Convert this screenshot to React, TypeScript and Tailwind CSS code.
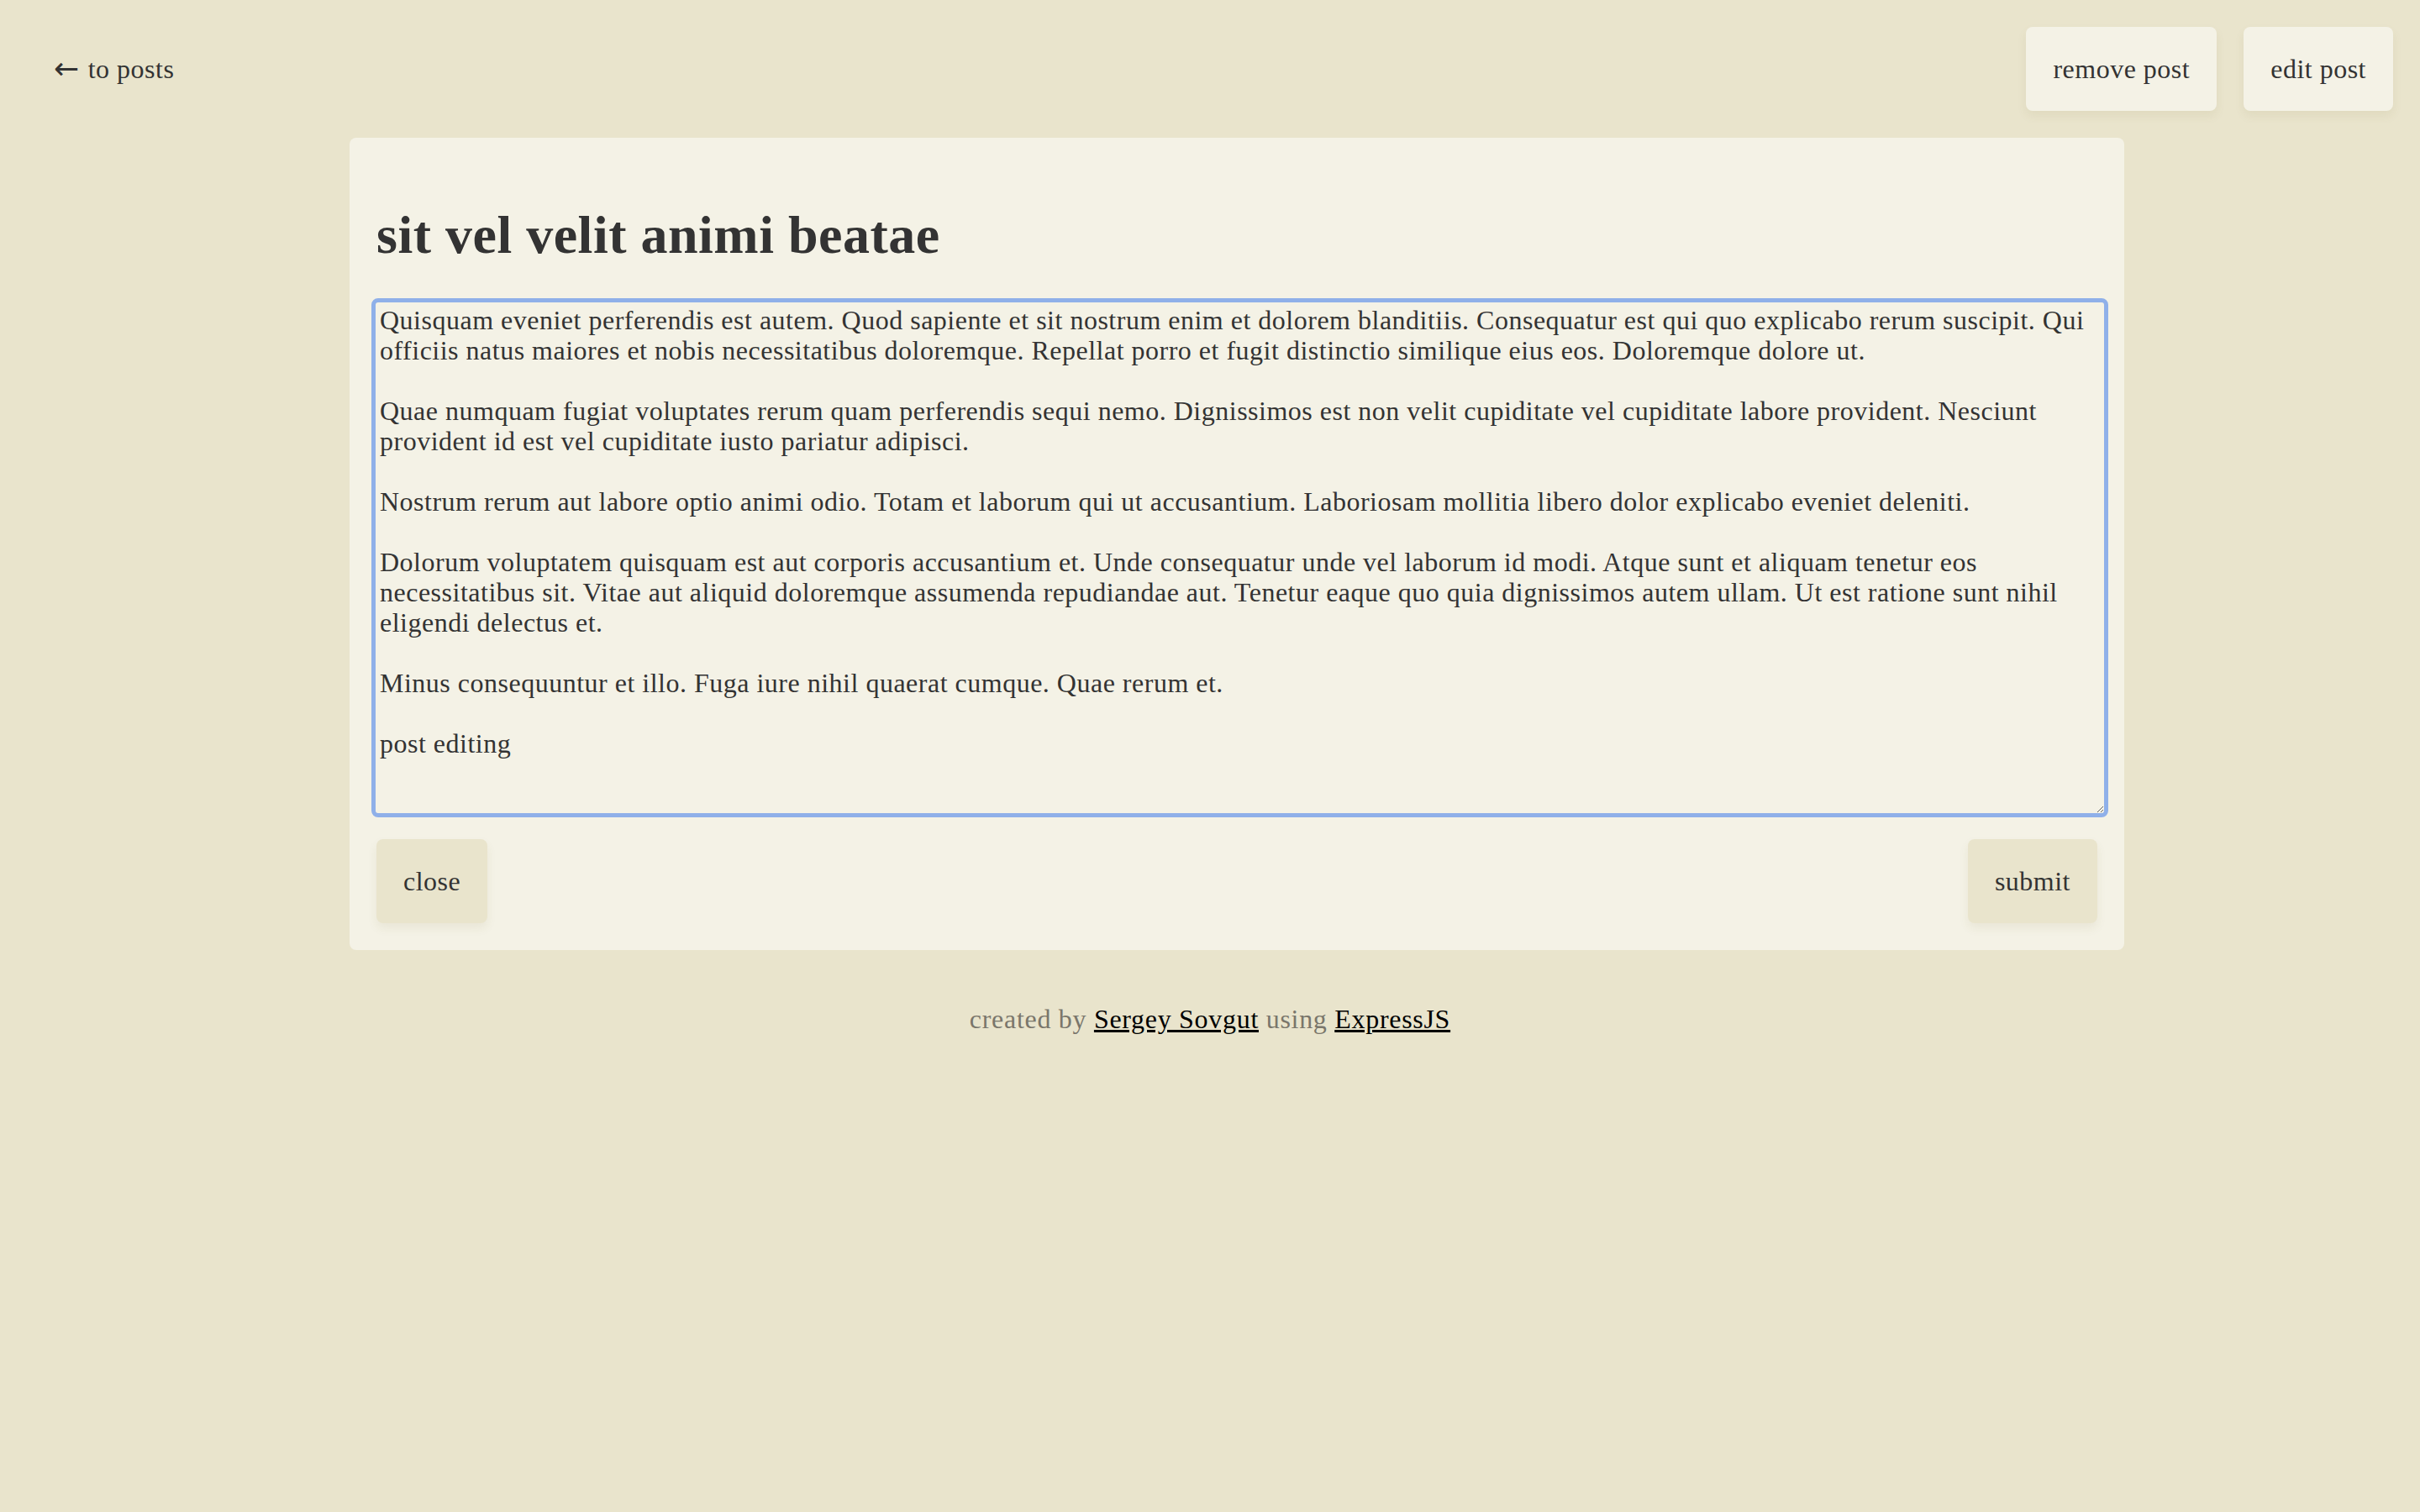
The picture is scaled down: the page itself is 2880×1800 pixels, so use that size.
const postBody = `Quisquam eveniet perferendis est autem. Quod sapiente et sit nostrum enim et dolorem blanditiis. Consequatur est qui quo explicabo rerum suscipit. Qui officiis natus maiores et nobis necessitatibus doloremque. Repellat porro et fugit distinctio similique eius eos. Doloremque dolore ut.

Quae numquam fugiat voluptates rerum quam perferendis sequi nemo. Dignissimos est non velit cupiditate vel cupiditate labore provident. Nesciunt provident id est vel cupiditate iusto pariatur adipisci.

Nostrum rerum aut labore optio animi odio. Totam et laborum qui ut accusantium. Laboriosam mollitia libero dolor explicabo eveniet deleniti.

Dolorum voluptatem quisquam est aut corporis accusantium et. Unde consequatur unde vel laborum id modi. Atque sunt et aliquam tenetur eos necessitatibus sit. Vitae aut aliquid doloremque assumenda repudiandae aut. Tenetur eaque quo quia dignissimos autem ullam. Ut est ratione sunt nihil eligendi delectus et.

Minus consequuntur et illo. Fuga iure nihil quaerat cumque. Quae rerum et.

post editing`

export default function App() {
  return (
    <div className="min-h-screen bg-[#e9e4cc] text-[#333333] font-['Liberation_Serif',serif] text-[32px] leading-[36px] tracking-[0.5px]">
      {/* Header */}
      <header className="flex items-center justify-between p-8">
        <a href="#" className="flex items-center p-8 text-[#333333]">
          <span className="mr-[10px] font-['DejaVu_Sans',sans-serif] text-[36px] leading-[36px]">←</span>
          to posts
        </a>
        <div className="flex gap-8">
          <button className="p-8 rounded-lg bg-[#f4f2e6] shadow-[0_6px_12px_rgba(120,100,40,0.08)]">
            remove post
          </button>
          <button className="p-8 rounded-lg bg-[#f4f2e6] shadow-[0_6px_12px_rgba(120,100,40,0.08)]">
            edit post
          </button>
        </div>
      </header>

      {/* Post card */}
      <div className="flex justify-center pl-16">
        <main className="w-[2112px] rounded-lg bg-[#f4f2e6] p-8">
          <h1 className="mt-[47px] mb-[38px] text-[64px] leading-[74px] font-bold">
            sit vel velit animi beatae
          </h1>
          <textarea
            defaultValue={postBody}
            spellCheck={false}
            className="block -ml-[6px] w-[2067px] h-[618px] rounded-[8px] border-[5px] border-[#8fb0e9] bg-transparent pl-[5px] pr-[5px] pt-[3px] text-[32px] leading-[36px] tracking-[0.5px] text-[#333333] outline-none font-['Liberation_Serif',serif]"
          />
          <div className="mt-[26px] flex justify-between">
            <button className="p-8 rounded-lg bg-[#e9e4cc] shadow-[0_6px_12px_rgba(120,100,40,0.08)]">
              close
            </button>
            <button className="p-8 rounded-lg bg-[#e9e4cc] shadow-[0_6px_12px_rgba(120,100,40,0.08)]">
              submit
            </button>
          </div>
        </main>
      </div>

      {/* Footer */}
      <footer className="mt-16 text-center text-[#7a766b] tracking-[0.7px]">
        created by{' '}
        <a href="#" className="text-black underline">
          Sergey Sovgut
        </a>{' '}
        using{' '}
        <a href="#" className="text-black underline">
          ExpressJS
        </a>
      </footer>
    </div>
  )
}
